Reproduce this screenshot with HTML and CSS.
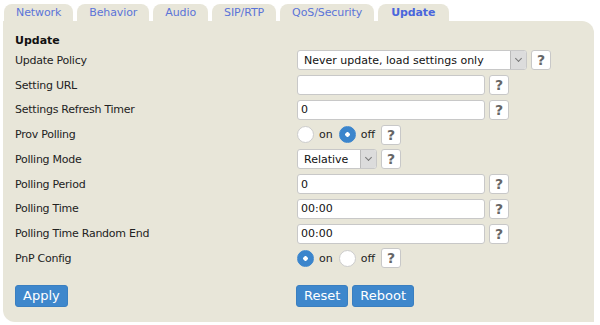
FILE: index.html
```html
<!DOCTYPE html>
<html>
    <head>
        <meta charset="UTF-8">
        <title>Update</title>
        <link rel="stylesheet" href="styles.css">
    </head>
    <body>
        <ul class="tabs">
            <li class="tab">Network</li>
            <li class="tab">Behavior</li>
            <li class="tab">Audio</li>
            <li class="tab">SIP/RTP</li>
            <li class="tab">QoS/Security</li>
            <li class="tab active">Update</li>
        </ul>

        <div class="panel">
            <h2 class="section-title">Update</h2>

            <div class="row">
                <span class="label">Update Policy</span>
                <div class="control">
                    <span class="select wide">Never update, load settings only<span class="arrow"></span></span>
                    <span class="help">?</span>
                </div>
            </div>
            <div class="row">
                <span class="label">Setting URL</span>
                <div class="control">
                    <span class="input"></span>
                    <span class="help">?</span>
                </div>
            </div>
            <div class="row">
                <span class="label">Settings Refresh Timer</span>
                <div class="control">
                    <span class="input">0</span>
                    <span class="help">?</span>
                </div>
            </div>
            <div class="row">
                <span class="label">Prov Polling</span>
                <div class="control">
                    <span class="radio"></span><span class="radio-text">on</span>
                    <span class="radio checked"></span><span class="radio-text">off</span>
                    <span class="help">?</span>
                </div>
            </div>
            <div class="row">
                <span class="label">Polling Mode</span>
                <div class="control">
                    <span class="select small">Relative<span class="arrow"></span></span>
                    <span class="help">?</span>
                </div>
            </div>
            <div class="row">
                <span class="label">Polling Period</span>
                <div class="control">
                    <span class="input">0</span>
                    <span class="help">?</span>
                </div>
            </div>
            <div class="row">
                <span class="label">Polling Time</span>
                <div class="control">
                    <span class="input">00:00</span>
                    <span class="help">?</span>
                </div>
            </div>
            <div class="row">
                <span class="label">Polling Time Random End</span>
                <div class="control">
                    <span class="input">00:00</span>
                    <span class="help">?</span>
                </div>
            </div>
            <div class="row">
                <span class="label">PnP Config</span>
                <div class="control">
                    <span class="radio checked"></span><span class="radio-text">on</span>
                    <span class="radio"></span><span class="radio-text">off</span>
                    <span class="help">?</span>
                </div>
            </div>

            <div class="actions">
                <div class="label"><button class="button">Apply</button></div>
                <div class="control">
                    <button class="button">Reset</button>
                    <button class="button">Reboot</button>
                </div>
            </div>
        </div>
    </body>
</html>
```

FILE: styles.css
```css
*
{
    box-sizing: border-box;
}

body
{
    margin: 0;
    padding: 4px 6px 0 3px;
    font-family: "DejaVu Sans", Verdana, sans-serif;
    font-size: 11px;
    color: #222;
    background: #fff;
}

.tabs
{
    display: flex;
    gap: 4px;
    margin: 0;
    padding: 0 0 0 1px;
    list-style: none;
}

.tab
{
    height: 17px;
    padding: 2px 12px 0 12px;
    background: #e8e6d9;
    border-radius: 8px 8px 0 0;
    color: #5b74d8;
    letter-spacing: -0.1px;
}

.tab.active
{
    padding: 2px 14px 0 13px;
    font-weight: bold;
    color: #4a66dc;
}

.panel
{
    padding: 13px 12px 13px 12px;
    background: #e8e6d9;
    border-radius: 0 12px 0 12px;
    height: 301px;
}

.section-title
{
    margin: 0;
    height: 14px;
    line-height: 14px;
    font-size: 11px;
    font-weight: bold;
    color: #111;
}

.row
{
    display: flex;
    align-items: center;
    height: 24.75px;
}

.label
{
    width: 282px;
    flex: none;
    letter-spacing: -0.25px;
}

.control
{
    display: flex;
    align-items: center;
    gap: 4px;
}

.input,
.select
{
    display: flex;
    align-items: center;
    height: 20px;
    padding: 0 3px;
    background: #fff;
    border: 1px solid #c8c8c8;
    border-radius: 3px;
    color: #111;
}

.input
{
    width: 188px;
}

.select
{
    position: relative;
    padding-left: 6px;
}

.select.wide
{
    width: 230px;
}

.select.small
{
    width: 80px;
}

.arrow
{
    position: absolute;
    top: 0;
    right: 0;
    width: 16px;
    height: 18px;
    background: #dcdcdc;
    border-left: 1px solid #bbb;
    border-radius: 0 2px 2px 0;
}

.arrow::after
{
    content: "";
    position: absolute;
    left: 5px;
    top: 5px;
    width: 4px;
    height: 4px;
    border-right: 1px solid #777;
    border-bottom: 1px solid #777;
    transform: rotate(45deg);
}

.help
{
    display: flex;
    align-items: center;
    justify-content: center;
    width: 20px;
    height: 20px;
    background: #fff;
    border: 1px solid #c8c8c8;
    border-radius: 3px;
    font-size: 14px;
    font-weight: bold;
    color: #666;
}

.radio
{
    width: 17px;
    height: 17px;
    background: #fff;
    border: 1px solid #ccc;
    border-radius: 50%;
}

.radio.checked
{
    border-color: #3b85cc;
    background-image: radial-gradient(circle, #fff 0 2px, #3b85cc 2.5px);
}

.radio-text
{
    margin: 0 2px 0 1px;
}

.actions
{
    display: flex;
    align-items: center;
    margin-top: 14px;
}

.button
{
    height: 22px;
    padding: 0 7px;
    background: #3e87cc;
    border: 1px solid #3a7fc0;
    border-radius: 3px;
    font-family: "DejaVu Sans", Verdana, sans-serif;
    font-size: 13px;
    color: #fff;
}

.actions .control
{
    margin-left: -1px;
}
```
